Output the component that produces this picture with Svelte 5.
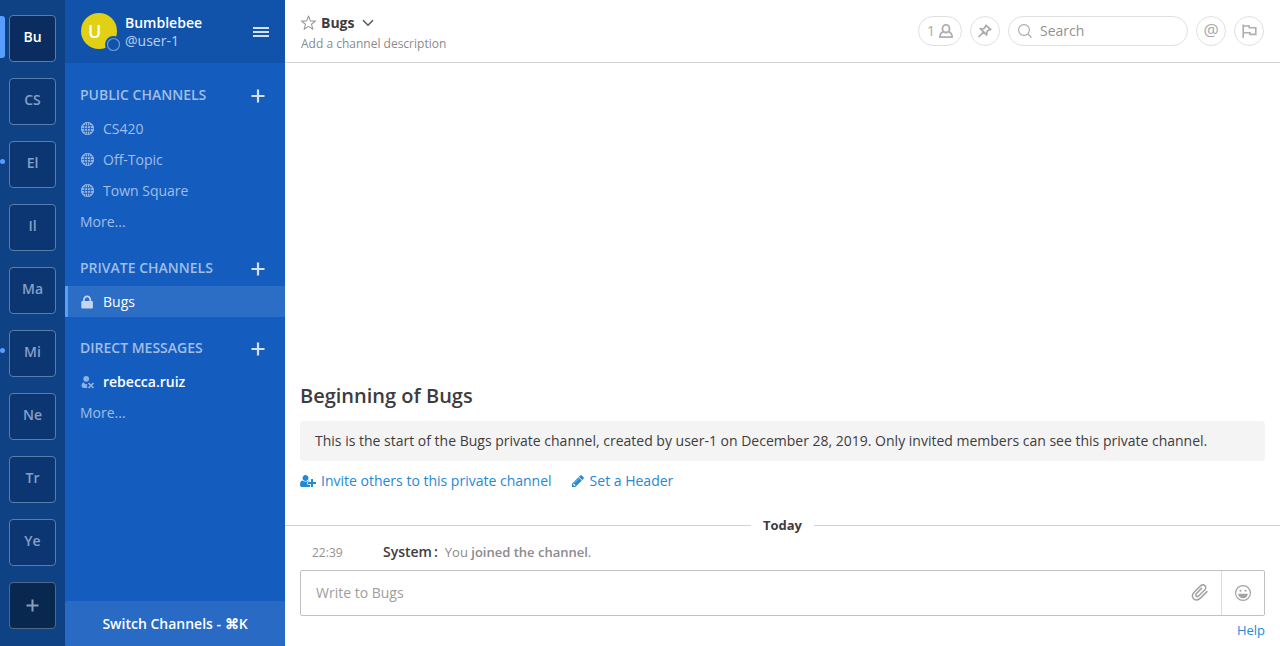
<script>
  const teams = [
    { label: 'Bu', active: true },
    { label: 'CS' },
    { label: 'El', unread: true },
    { label: 'Il' },
    { label: 'Ma' },
    { label: 'Mi', unread: true },
    { label: 'Ne' },
    { label: 'Tr' },
    { label: 'Ye' }
  ];

  const sections = [
    {
      title: 'PUBLIC CHANNELS',
      items: [
        { name: 'CS420', icon: 'globe' },
        { name: 'Off-Topic', icon: 'globe' },
        { name: 'Town Square', icon: 'globe' }
      ],
      more: true
    },
    { title: 'PRIVATE CHANNELS', items: [{ name: 'Bugs', icon: 'lock', active: true }] },
    { title: 'DIRECT MESSAGES', items: [{ name: 'rebecca.ruiz', icon: 'guest', unread: true }], more: true }
  ];

  let search = $state('');
  let message = $state('');
</script>

<div class="app">
  <nav class="teams" aria-label="Teams">
    {#each teams as team}
      <div class="slot" class:active={team.active} class:unread={team.unread}>
        <button class="team">{team.label}</button>
      </div>
    {/each}
    <div class="slot">
      <button class="team add" aria-label="Create a team">
        <svg width="13" height="13" viewBox="0 0 13 13"><path d="M6.5 0.5v12M0.5 6.5h12" stroke="currentColor" stroke-width="2" /></svg>
      </button>
    </div>
  </nav>

  <aside class="sidebar">
    <header class="profile">
      <div class="avatar">
        <span>U</span>
        <svg class="status" width="17" height="17" viewBox="0 0 17 17">
          <circle cx="8.5" cy="8.5" r="8.5" fill="#1153ab" />
          <circle cx="8.5" cy="8.5" r="6" fill="none" stroke="#6f9ad2" stroke-width="1.2" />
        </svg>
      </div>
      <div class="who">
        <strong>Bumblebee</strong>
        <span>@user-1</span>
      </div>
      <button class="menu" aria-label="Main menu">
        <svg width="16" height="10" viewBox="0 0 16 10"><path d="M0 1h16M0 5h16M0 9h16" stroke="#d4e1f2" stroke-width="2" /></svg>
      </button>
    </header>

    <nav class="channels" aria-label="Channels">
      {#each sections as section}
        <section>
          <div class="heading">
            <h2>{section.title}</h2>
            <button aria-label="Add to {section.title}">
              <svg width="14" height="14" viewBox="0 0 14 14"><path d="M7 0.500v13M0.500 7h13" stroke="#d6e2f4" stroke-width="2.200" /></svg>
            </button>
          </div>
          {#each section.items as item}
            <a href="#channel" class="row" class:current={item.active} class:bold={item.unread}>
              {#if item.icon === 'globe'}
                <svg width="14" height="14" viewBox="0 0 14 14">
                  <circle cx="6.500" cy="6.500" r="6.500" fill="#93b4e4" />
                  <path d="M6.500 0v13M0 6.500h13M1 3.700h11M1 9.300h11M4.800 .7q-3 5.800 0 11.600M8.200 .7q3 5.800 0 11.600" fill="none" stroke="#145dbf" stroke-width=".8" />
                  <circle cx="6.500" cy="6.500" r="6" fill="none" stroke="#93b4e4" />
                </svg>
              {:else if item.icon === 'lock'}
                <svg width="14" height="14" viewBox="0 0 14 14">
                  <path d="M3 7V4.6a3.2 3.6 0 0 1 6.4 0V7" transform="translate(-.1 .3)" fill="none" stroke="#c4d5ef" stroke-width="1.7" />
                  <rect x="0.3" y="6" width="11.6" height="7.6" rx="1" fill="#c4d5ef" />
                </svg>
              {:else}
                <svg width="14" height="14" viewBox="0 0 14 14" fill="#8db1e3">
                  <circle cx="5.2" cy="3.8" r="2.9" />
                  <path d="M2.4 7.2Q.5 8 .5 10.8q0 2 2 2.2H6l.7-1-1.3-1.4L7 9Q4 9.8 2.400 7.2z" />
                  <path d="M7.500 8l5 5M12.500 8l-5 5" stroke="#8db1e3" stroke-width="1.700" />
                </svg>
              {/if}
              <span>{item.name}</span>
            </a>
          {/each}
          {#if section.more}
            <button class="row more">More...</button>
          {/if}
        </section>
      {/each}
    </nav>

    <button class="switcher">Switch Channels - ⌘K</button>
  </aside>

  <main>
    <header class="topbar">
      <div class="title">
        <div class="name">
          <button class="star" aria-label="Add to favorites">
            <svg width="16" height="16" viewBox="0 0 16 16"><path d="M7.500 1l1.900 4.900 5.100.2-4 3.200 1.400 5-4.400-2.900-4.400 2.900 1.400-5-4-3.200 5.100-.2z" fill="none" stroke="#9a9a9c" stroke-width="1.100" stroke-linejoin="round" /></svg>
          </button>
          <button class="channel">
            <strong>Bugs</strong>
            <svg width="12" height="8" viewBox="0 0 12 8"><path d="M1 1.200l5 5 5-5" fill="none" stroke="#5a595d" stroke-width="1.600" /></svg>
          </button>
        </div>
        <button class="description">Add a channel description</button>
      </div>
      <div class="tools">
        <button class="pill members" aria-label="1 member">
          <span>1</span>
          <svg width="14" height="14" viewBox="0 0 14 14" fill="none" stroke="#afafb0" stroke-width="1.800">
            <rect x="3.500" y="0.900" width="7" height="7.600" rx="3.400" />
            <path d="M4.300 7.800Q.9 8.800 .9 13.100h12.200Q13.100 8.800 9.700 7.800" />
          </svg>
        </button>
        <button class="pill round" aria-label="Pinned posts">
          <svg width="14" height="14" viewBox="0 0 14 14" fill="none" stroke="#a9a9aa" stroke-width="1.700">
            <path d="M7.400 .8l5.800 5.200M8.200 1.600L6.100 4.500 2.700 5l5.800 5.700.7-3.500 3-2.200M5.500 8L.7 13M1.900 4.200l7.300 7.200" />
          </svg>
        </button>
        <label class="pill search">
          <svg width="14" height="14" viewBox="0 0 14 14" fill="none" stroke="#a8a8a9" stroke-width="1.100"><circle cx="6" cy="6" r="5.400" /><path d="M10 10l3.500 3.500" /></svg>
          <input type="text" placeholder="Search" aria-label="Search" bind:value={search} />
        </label>
        <button class="pill round mention" aria-label="Recent mentions">@</button>
        <button class="pill round" aria-label="Flagged posts">
          <svg width="15" height="15" viewBox="0 0 15 15" fill="none" stroke="#afafb0" stroke-width="1.600">
            <path d="M1.200 .5v13.500M1.200 2h6v1.800h6.600v6.600H8V8.800H1.200" />
          </svg>
        </button>
      </div>
    </header>

    <div class="posts">
      <section class="intro">
        <h1>Beginning of Bugs</h1>
        <p>This is the start of the Bugs private channel, created by user-1 on December 28, 2019. Only invited members can see this private channel.</p>
        <div class="links">
          <a href="#invite">
            <svg width="16" height="14" viewBox="0 0 2048 1792" fill="currentColor"><path d="M704 896q-159 0-271.500-112.500t-112.500-271.500 112.500-271.500 271.500-112.500 271.500 112.500 112.500 271.500-112.500 271.500-271.500 112.500zm960 128h352q13 0 22.500 9.500t9.500 22.500v192q0 13-9.500 22.500t-22.500 9.500h-352v352q0 13-9.500 22.500t-22.500 9.500h-192q-13 0-22.500-9.500t-9.500-22.500v-352h-352q-13 0-22.500-9.500t-9.500-22.500v-192q0-13 9.500-22.500t22.500-9.500h352v-352q0-13 9.500-22.500t22.500-9.500h192q13 0 22.500 9.500t9.500 22.500v352zm-736 224q0 52 38 90t90 38h256v238q-68 50-171 50h-874q-121 0-194-69t-73-190q0-53 3.500-103.500t14-109 26.500-108.500 43-97.500 62-81 85.500-53.500 111.500-20q19 0 39 17 79 61 154.500 91.500t164.500 30.500 164.500-30.500 154.500-91.500q20-17 39-17 132 0 217 96h-223q-52 0-90 38t-38 90v192z" /></svg>
            Invite others to this private channel
          </a>
          <a href="#header">
            <svg width="14" height="14" viewBox="128 0 1792 1792" fill="currentColor"><path d="M491 1536l91-91-235-235-91 91v107h128v128h107zm523-928q0-22-22-22-10 0-17 7l-542 542q-7 7-7 17 0 22 22 22 10 0 17-7l542-542q7-7 7-17zm-54-192l416 416-832 832h-416v-416zm683 96q0 53-37 90l-166 166-416-416 166-165q36-38 90-38 53 0 91 38l235 234q37 39 37 91z" /></svg>
            Set a Header
          </a>
        </div>
      </section>
      <div class="divider"><span>Today</span></div>
      <article class="post">
        <time>22:39</time>
        <strong class="author">System<span>:</span></strong>
        <p>You <b>joined the channel</b>.</p>
      </article>
    </div>

    <form class="composer">
      <div class="box">
        <textarea rows="1" placeholder="Write to Bugs" aria-label="Write to Bugs" bind:value={message}></textarea>
        <button type="button" class="attach" aria-label="Attach a file">
          <svg width="18" height="18" viewBox="0 0 18 18" fill="none" stroke="#a3a3a4" stroke-width="1.500" stroke-linecap="round">
            <path d="M16.500 7.200l-6.200 6.300c-2.400 2.300-5 2.500-7 .9-1.900-1.800-1.700-4.400.4-6.500l6.200-6.200c1.500-1.500 3.400-1.700 4.600-.5s1.100 3-.3 4.400l-5.700 5.800c-.9.9-2 1-2.700.3s-.6-1.700.3-2.600l5-5.100" transform="translate(-.6 .4)" />
          </svg>
        </button>
        <button type="button" class="emoji" aria-label="Pick an emoji">
          <svg width="16" height="16" viewBox="0 0 16 16">
            <circle cx="8" cy="8" r="7.400" fill="none" stroke="#a3a3a4" stroke-width="1.200" />
            <circle cx="5.400" cy="5.700" r="1" fill="#a3a3a4" /><circle cx="10.600" cy="5.700" r="1" fill="#a3a3a4" />
            <path d="M3.200 8.700h9.600a4.800 4.500 0 0 1-9.600 0z" fill="#a3a3a4" />
          </svg>
        </button>
      </div>
      <a class="help" href="#help">Help</a>
    </form>
  </main>
</div>

<style>
  :global(body) {
    margin: 0;
    font-family: 'Open Sans', sans-serif;
    font-size: 14px;
    line-height: 20px;
    color: #3d3c40;
    background: #fff;
  }
  .app {
    display: flex;
    height: 100vh;
    overflow: hidden;
  }
  button, input, textarea {
    box-sizing: border-box;
    margin: 0;
    padding: 0;
    border: 0;
    background: none;
    font: inherit;
    color: inherit;
    outline: 0;
  }
  button { cursor: pointer; }
  svg { display: block; flex: none; }
  a { text-decoration: none; color: #2389d7; }
  h1, h2, p { margin: 0; }

  .teams {
    flex: none;
    width: 65px;
    box-sizing: border-box;
    padding-top: 15px;
    display: flex;
    flex-direction: column;
    gap: 16px;
    background: #0f4285;
  }
  .slot {
    position: relative;
    display: flex;
    justify-content: center;
  }
  .team {
    width: 47px;
    height: 47px;
    padding-bottom: 3px;
    border: 1px solid #577cae;
    border-radius: 4px;
    background: #0b3672;
    color: #85a0c5;
    font-weight: 600;
  }
  .active .team {
    background: #0a2c5e;
    color: #fff;
  }
  .team.add {
    display: flex;
    align-items: center;
    justify-content: center;
    padding: 0;
    background: #092850;
    border-color: #51688a;
    color: #8d9eb7;
  }
  .active::before {
    content: '';
    position: absolute;
    left: 0;
    top: 1px;
    width: 5px;
    height: 42px;
    border-radius: 0 3px 3px 0;
    background: #579eff;
  }
  .unread::before {
    content: '';
    position: absolute;
    left: 0;
    top: 18px;
    width: 5px;
    height: 5px;
    border-radius: 3px;
    background: #579eff;
  }

  .sidebar {
    flex: none;
    width: 220px;
    display: flex;
    flex-direction: column;
    background: #145dbf;
    color: #a1bee5;
  }
  .profile {
    height: 63px;
    box-sizing: border-box;
    padding: 0 16px;
    display: flex;
    align-items: center;
    background: #1153ab;
  }
  .avatar {
    position: relative;
    width: 36px;
    height: 36px;
    margin-bottom: 2px;
    border-radius: 50%;
    background: #e1d013;
    color: #fff;
    font-size: 18px;
    font-weight: 600;
    line-height: 36px;
  }
  .avatar span { padding-left: 7px; }
  .status {
    position: absolute;
    left: 24px;
    top: 23px;
  }
  .who {
    flex: 1;
    margin-left: 8px;
    display: flex;
    flex-direction: column;
    line-height: 18px;
  }
  .who strong {
    color: #fff;
    font-weight: 600;
  }
  .who span { color: #bcd0eb; }
  .channels {
    flex: 1;
    min-height: 0;
    padding-top: 1px;
  }
  .heading {
    display: flex;
    align-items: center;
    justify-content: space-between;
    height: 36px;
    padding: 13px 20px 0 15px;
  }
  .heading h2 {
    font-size: 14px;
    font-weight: 600;
  }
  .heading button { padding-top: 2px; }
  .row {
    display: flex;
    align-items: center;
    gap: 8px;
    width: 100%;
    height: 31px;
    box-sizing: border-box;
    padding: 0 16px;
    color: #a1bee5;
  }
  .row.more { padding-left: 15px; }
  .row.bold {
    color: #fff;
    font-weight: 600;
  }
  .row.current {
    padding-left: 13px;
    border-left: 3px solid #579eff;
    background: #2c6dc5;
    color: #fff;
  }
  .switcher {
    flex: none;
    height: 45px;
    border-radius: 2px;
    background: #286ac4;
    color: #fff;
    font-weight: 600;
  }

  main {
    flex: 1;
    min-width: 0;
    display: flex;
    flex-direction: column;
  }
  .topbar {
    flex: none;
    height: 63px;
    box-sizing: border-box;
    padding: 0 16px;
    display: flex;
    align-items: center;
    justify-content: space-between;
    border-bottom: 1px solid #d3d3d4;
  }
  .title {
    display: flex;
    flex-direction: column;
    align-items: flex-start;
    padding-top: 5px;
  }
  .name, .channel {
    display: flex;
    align-items: center;
  }
  .star { margin-right: 4px; }
  .channel { gap: 8px; }
  .channel strong { font-weight: 700; }
  .description {
    font-size: 12px;
    line-height: 21px;
    color: #8b8a8c;
  }
  .tools {
    display: flex;
    gap: 8px;
    color: #a8a8a9;
  }
  .pill {
    box-sizing: border-box;
    height: 30px;
    border: 1px solid #dfdfe0;
    border-radius: 15px;
    display: flex;
    align-items: center;
    justify-content: center;
  }
  .members {
    width: 44px;
    gap: 4px;
  }
  .round { width: 30px; }
  .mention {
    font-size: 17px;
    padding-bottom: 3px;
  }
  .search {
    width: 180px;
    padding: 0 9px;
    gap: 8px;
  }
  .search input {
    flex: 1;
    min-width: 0;
  }
  .search input::placeholder { color: #929293; opacity: 1; }

  .posts {
    flex: 1;
    min-height: 0;
    display: flex;
    flex-direction: column;
    justify-content: flex-end;
  }
  .intro { padding: 0 15px; }
  h1 {
    font-size: 20px;
    line-height: 24px;
    font-weight: 600;
    margin-bottom: 13px;
  }
  .intro p {
    padding: 10px 15px;
    border-radius: 4px;
    background: #f4f4f4;
  }
  .links {
    display: flex;
    gap: 20px;
    padding: 10px 0 24px;
  }
  .links a {
    display: flex;
    align-items: center;
    gap: 5px;
  }
  .links a + a { gap: 4px; }
  .divider {
    display: flex;
    align-items: center;
    gap: 12px;
    font-size: 13px;
    font-weight: 700;
  }
  .divider::before, .divider::after {
    content: '';
    flex: 1;
    height: 1px;
    background: #d3d3d4;
  }
  .post {
    display: flex;
    align-items: baseline;
    padding: 7px 16px 7px 27px;
  }
  time {
    width: 71px;
    font-size: 12px;
    color: #929193;
  }
  .author { font-weight: 600; }
  .author span { margin-left: 2px; }
  .post p {
    margin-left: 7px;
    font-size: 13px;
    color: #8b8a8c;
  }
  .post b { font-weight: 600; }

  .composer {
    flex: none;
    display: flex;
    flex-direction: column;
    padding: 0 15px 2px;
  }
  .box {
    display: flex;
    height: 46px;
    box-sizing: border-box;
    border: 1px solid #c1c1c2;
    border-radius: 2px;
  }
  textarea {
    flex: 1;
    padding: 12px 15px;
    resize: none;
    overflow: hidden;
  }
  textarea::placeholder { color: #9e9d9f; opacity: 1; }
  .attach, .emoji {
    display: flex;
    align-items: center;
    justify-content: center;
    width: 43px;
  }
  .emoji { border-left: 1px solid #dcdcdd; }
  .help {
    align-self: flex-end;
    font-size: 13px;
    line-height: 28px;
  }
</style>
